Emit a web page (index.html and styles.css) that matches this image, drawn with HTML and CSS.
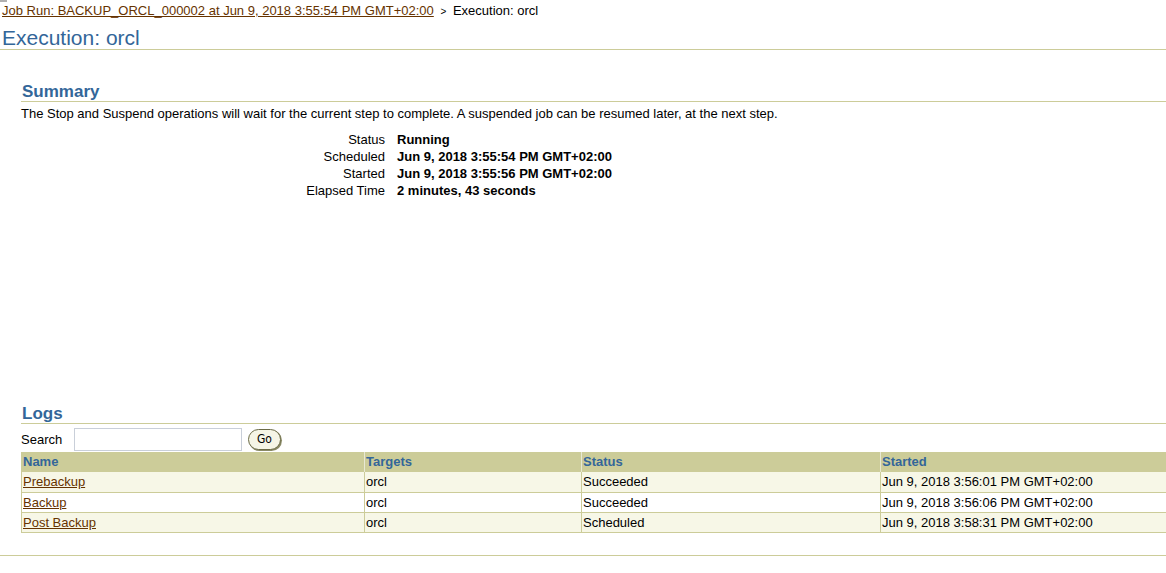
FILE: index.html
```html
<!DOCTYPE html>
<html>
<head>
<meta charset="utf-8">
<title>Execution: orcl</title>
<link rel="stylesheet" href="styles.css">
</head>
<body>
<div class="topmark"></div>
<div class="crumbs">
  <a href="#" class="link">Job Run: BACKUP_ORCL_000002 at Jun 9, 2018 3:55:54 PM GMT+02:00</a>
  <span class="sep">&gt;</span>
  <span>Execution: orcl</span>
</div>
<h1 class="page-title">Execution: orcl</h1>

<div class="content">
  <h2 class="section-title summary-title">Summary</h2>
  <p class="note">The Stop and Suspend operations will wait for the current step to complete. A suspended job can be resumed later, at the next step.</p>
  <div class="props">
    <div class="label">Status</div><div class="value">Running</div>
    <div class="label">Scheduled</div><div class="value">Jun 9, 2018 3:55:54 PM GMT+02:00</div>
    <div class="label">Started</div><div class="value">Jun 9, 2018 3:55:56 PM GMT+02:00</div>
    <div class="label">Elapsed Time</div><div class="value">2 minutes, 43 seconds</div>
  </div>

  <h2 class="section-title logs-title">Logs</h2>
  <div class="search">
    <span class="search-label">Search</span>
    <input type="text" class="search-input">
    <button class="go">Go</button>
  </div>
  <table class="grid">
    <colgroup>
      <col class="c1"><col class="c2"><col class="c3"><col class="c4">
    </colgroup>
    <thead>
      <tr><th>Name</th><th>Targets</th><th>Status</th><th>Started</th></tr>
    </thead>
    <tbody>
      <tr class="odd"><td><a href="#" class="link">Prebackup</a></td><td>orcl</td><td>Succeeded</td><td>Jun 9, 2018 3:56:01 PM GMT+02:00</td></tr>
      <tr><td><a href="#" class="link">Backup</a></td><td>orcl</td><td>Succeeded</td><td>Jun 9, 2018 3:56:06 PM GMT+02:00</td></tr>
      <tr class="odd"><td><a href="#" class="link">Post Backup</a></td><td>orcl</td><td>Scheduled</td><td>Jun 9, 2018 3:58:31 PM GMT+02:00</td></tr>
    </tbody>
  </table>
</div>
<div class="footer-line"></div>
</body>
</html>
```
FILE: styles.css
```css
html, body {
  margin: 0;
  padding: 0;
  background: #ffffff;
}
body {
  font-family: "Liberation Sans", Arial, sans-serif;
  font-size: 13px;
  color: #000000;
}
.topmark {
  position: absolute;
  left: 0;
  top: 0;
  width: 7px;
  height: 2px;
  background: #b0b0b0;
}
.link {
  color: #663300;
  text-decoration: underline;
}
.crumbs {
  padding: 4px 0 0 2px;
  height: 14px;
  line-height: 14px;
}
.sep {
  font-size: 10px;
  margin: 0 3px;
}
.page-title {
  margin: 8px 0 0 0;
  padding: 0 0 0 2px;
  font-size: 21px;
  line-height: 23px;
  font-weight: normal;
  color: #336699;
  border-bottom: 1px solid #cccc99;
}
.content {
  padding-left: 21px;
}
.section-title {
  margin: 0;
  padding-left: 1px;
  font-size: 17px;
  line-height: 19px;
  font-weight: bold;
  color: #336699;
  border-bottom: 1px solid #cccc99;
}
.summary-title {
  margin-top: 32px;
}
.note {
  margin: 4px 0 0 0;
  line-height: 15px;
}
.props {
  display: grid;
  grid-template-columns: 364px auto;
  column-gap: 12px;
  margin-top: 10px;
  line-height: 17px;
}
.label {
  text-align: right;
}
.value {
  font-weight: bold;
}
.logs-title {
  margin-top: 205px;
}
.search {
  display: flex;
  align-items: center;
  height: 26px;
  margin-top: 2px;
}
.search-label {
  width: 53px;
}
.search-input {
  box-sizing: border-box;
  width: 168px;
  height: 23px;
  margin: 0;
  border: 1px solid #c9cfd9;
  padding: 0 2px;
  font-family: inherit;
  font-size: 13px;
}
.go {
  box-sizing: border-box;
  margin-left: 6px;
  width: 33px;
  height: 21px;
  padding: 0;
  border: 1px solid #6b6b47;
  border-radius: 11px;
  background: #f5f5e6;
  box-shadow: 1px 1px 0 #8a8a66;
  font-family: "DejaVu Sans Condensed", "DejaVu Sans", sans-serif;
  font-size: 12px;
  color: #000;
}
.grid {
  width: 100%;
  margin-top: 0;
  border-collapse: collapse;
  table-layout: fixed;
  border-left: 1px solid #cccc99;
}
.c1 { width: 343px; }
.c2 { width: 217px; }
.c3 { width: 299px; }
.c4 { width: auto; }
.grid th {
  background: #cccc99;
  color: #336699;
  font-weight: bold;
  text-align: left;
  height: 20px;
  padding: 0 1px;
  border-left: 1px solid #e8e8d4;
  line-height: 18px;
  vertical-align: middle;
}
.grid th:first-child {
  border-left: none;
}
.grid td {
  box-sizing: border-box;
  height: 20px;
  padding: 1px 1px 0 1px;
  border-left: 1px solid #cccc99;
  border-bottom: 1px solid #cccc99;
  line-height: 18px;
  white-space: nowrap;
}
.grid td:first-child {
  border-left: none;
}
.grid tr.odd td {
  background: #f7f7e7;
}
.footer-line {
  margin-top: 22px;
  border-top: 1px solid #cccc99;
}
```
